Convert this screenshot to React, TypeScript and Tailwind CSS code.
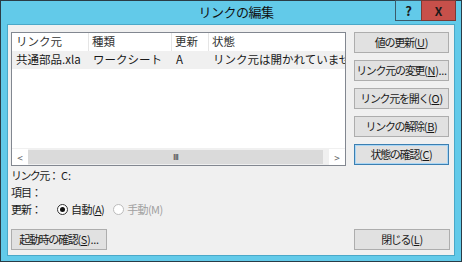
import React from "react";

const font = { fontFamily: '"Noto Sans CJK JP", "Noto Sans", sans-serif' };

const Btn: React.FC<{ label: string; k: string; tail?: string; focused?: boolean; className?: string }> = ({
  label,
  k,
  tail,
  focused,
  className,
}) => (
  <div
    className={`flex h-[21px] items-center justify-center border bg-[#e1e1e1] text-[11px] leading-none text-[#1a1a1a] whitespace-nowrap ${
      focused ? "border-[#3c7fb1] shadow-[inset_0_0_0_1px_#a9d6f5]" : "border-[#adadad]"
    } ${className ?? ""}`}
  >
    <span className="tracking-[-1.3px]">{label}</span>
    <span className="tracking-[-0.3px]">
      (<span className="underline">{k}</span>){tail}
    </span>
  </div>
);

export default function App() {
  return (
    <div className="w-[462px] h-[262px] bg-[#62cae9] border border-[#2a3c46] flex flex-col text-[#1a1a1a]" style={font}>
      {/* title bar */}
      <div className="h-[23px] flex items-start relative">
        <div className="flex-1 h-[22px] flex items-center justify-center text-[13px] text-[#111] pl-[10px] tracking-[-0.5px]">リンクの編集</div>
        <div className="absolute right-[5px] top-[-1px] flex">
          <div className="w-[26px] h-[21px] border border-[#3b5a6a] border-r-0 flex items-center justify-center text-[13px] font-bold">?</div>
          <div className="w-[35px] h-[21px] bg-[#c7504a] border border-[#7a3a35] flex items-center justify-center text-[12px] font-bold text-[#1a1a1a]">
            X
          </div>
        </div>
      </div>

      {/* client */}
      <div className="mx-[6px] mb-[5px] flex-1 bg-[#f0f0f0] border border-[#4aa8c8] flex flex-col pl-[3px] pr-[4px] pt-[7px] pb-[5px] text-[11.5px]">
        <div className="flex gap-[8px]">
          {/* list */}
          <div className="w-[335px] h-[134px] bg-white border border-[#828790] flex flex-col overflow-hidden">
            <div className="flex h-[18px] items-center text-[#333] whitespace-nowrap">
              <div className="w-[77px] pl-[4px] border-r border-[#e5e5e5] h-full flex items-center">リンク元</div>
              <div className="w-[83px] pl-[3px] border-r border-[#e5e5e5] h-full flex items-center">種類</div>
              <div className="w-[37px] pl-[3px] border-r border-[#e5e5e5] h-full flex items-center">更新</div>
              <div className="flex-1 pl-[3px] h-full flex items-center">状態</div>
            </div>
            <div className="flex h-[18px] items-center bg-[#f0f0f0] whitespace-nowrap">
              <div className="w-[77px] pl-[4px]">共通部品.xla</div>
              <div className="w-[83px] pl-[4px]">ワークシート</div>
              <div className="w-[37px] pl-[4px]">A</div>
              <div className="flex-1 pl-[4px] overflow-hidden">リンク元は開かれていません</div>
            </div>
            <div className="flex-1" />
            {/* horizontal scrollbar */}
            <div className="h-[17px] flex bg-[#f0f0f0] border-t border-[#f0f0f0]">
              <div className="w-[16px] bg-white flex items-center justify-center text-[#606060] text-[10px]">&lt;</div>
              <div className="flex-1 bg-[#dadada] border-y border-[#f0f0f0] flex items-center justify-center text-[#606060] text-[8px] font-bold tracking-[-1px]">
                III
              </div>
              <div className="w-[6px] bg-[#f0f0f0]" />
              <div className="w-[16px] bg-white flex items-center justify-center text-[#606060] text-[10px]">&gt;</div>
            </div>
          </div>

          {/* buttons */}
          <div className="w-[95px] flex flex-col gap-[7px]">
            <Btn label="値の更新" k="U" />
            <Btn label="リンク元の変更" k="N" tail="..." />
            <Btn label="リンク元を開く" k="O" />
            <Btn label="リンクの解除" k="B" />
            <Btn label="状態の確認" k="C" focused />
          </div>
        </div>

        {/* info */}
        <div className="mt-[1px] flex flex-col leading-[17px] text-[11px] whitespace-nowrap">
          <div className="flex">
            <span className="shrink-0 tracking-[-1.6px]">リンク元：</span>
            <span className="ml-[3px]">C:</span>
          </div>
          <div className="tracking-[-1px]">項目：</div>
          <div className="flex items-center">
            <span className="w-[46px] tracking-[-1px]">更新：</span>
            <span className="w-[11px] h-[11px] rounded-full border border-[#333] bg-white flex items-center justify-center">
              <span className="w-[5px] h-[5px] rounded-full bg-[#111]" />
            </span>
            <span className="ml-[3px] tracking-[-0.6px]">
              自動(<span className="underline">A</span>)
            </span>
            <span className="ml-[9px] w-[11px] h-[11px] rounded-full border border-[#bcbcbc] bg-white" />
            <span className="ml-[3px] text-[#a0a0a0] tracking-[-0.6px]">手動(M)</span>
          </div>
        </div>

        <div className="mt-auto flex justify-between items-end">
          <Btn label="起動時の確認" k="S" tail="..." className="w-[96px]" />
          <Btn label="閉じる" k="L" className="w-[96px]" />
        </div>
      </div>
    </div>
  );
}
